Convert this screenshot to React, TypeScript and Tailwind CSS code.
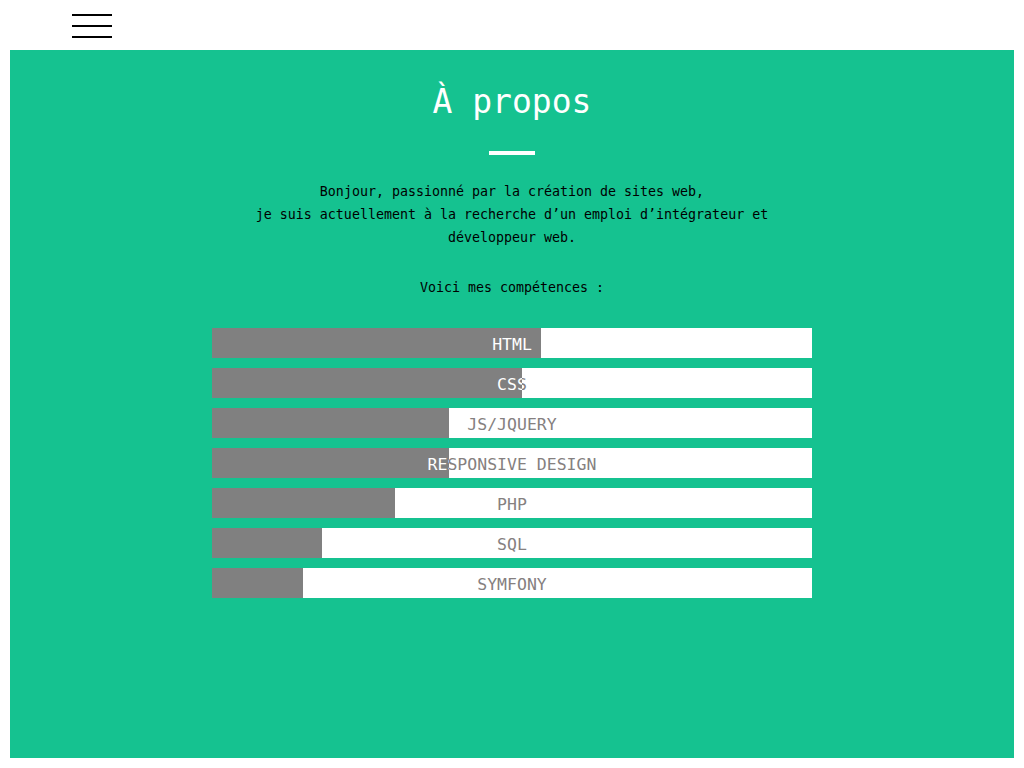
import React from "react";

const skills: { name: string; pct: number }[] = [
  { name: "HTML", pct: 329 },
  { name: "CSS", pct: 310 },
  { name: "JS/JQUERY", pct: 237 },
  { name: "RESPONSIVE DESIGN", pct: 237 },
  { name: "PHP", pct: 183 },
  { name: "SQL", pct: 110 },
  { name: "SYMFONY", pct: 91 },
];

const mono = "font-['DejaVu_Sans_Mono',monospace]";

function Bar({ name, pct }: { name: string; pct: number }) {
  return (
    <div className="relative h-[30px] w-[600px] bg-white">
      <div className={`flex h-full w-full items-center justify-center pt-[4px] text-[16.5px] text-[#858080] ${mono}`}>
        {name}
      </div>
      <div className="absolute left-0 top-0 h-full overflow-hidden bg-[#808080]" style={{ width: pct }}>
        <div className={`flex h-full w-[600px] items-center justify-center pt-[4px] text-[16.5px] text-white ${mono}`}>
          {name}
        </div>
      </div>
    </div>
  );
}

export default function App() {
  return (
    <div className="flex min-h-[768px] flex-col bg-white">
      <header className="flex h-[50px] items-start pl-[72px] pt-[14px]">
        <div className="flex w-[40px] flex-col gap-[9px]">
          <div className="h-[2px] bg-black" />
          <div className="h-[2px] bg-black" />
          <div className="h-[2px] bg-black" />
        </div>
      </header>
      <section className="mx-[10px] mb-[10px] flex h-[708px] flex-col items-center bg-[#15c290]">
        <h1 className={`mt-[27px] text-[33px] leading-[50px] text-white ${mono}`} style={{ fontWeight: 300 }}>
          À propos
        </h1>
        <div className="mt-[24px] h-[4px] w-[46px] bg-white" />
        <p className={`mt-[25px] text-center text-[13.3px] leading-[23px] text-black ${mono}`}>
          Bonjour, passionné par la création de sites web,
          <br />
          je suis actuellement à la recherche d’un emploi d’intégrateur et
          <br />
          développeur web.
        </p>
        <p className={`mt-[27px] text-center text-[13.3px] leading-[23px] text-black ${mono}`}>
          Voici mes compétences :
        </p>
        <div className="mt-[29px] flex flex-col gap-[10px]">
          {skills.map((s) => (
            <Bar key={s.name} name={s.name} pct={s.pct} />
          ))}
        </div>
      </section>
    </div>
  );
}
